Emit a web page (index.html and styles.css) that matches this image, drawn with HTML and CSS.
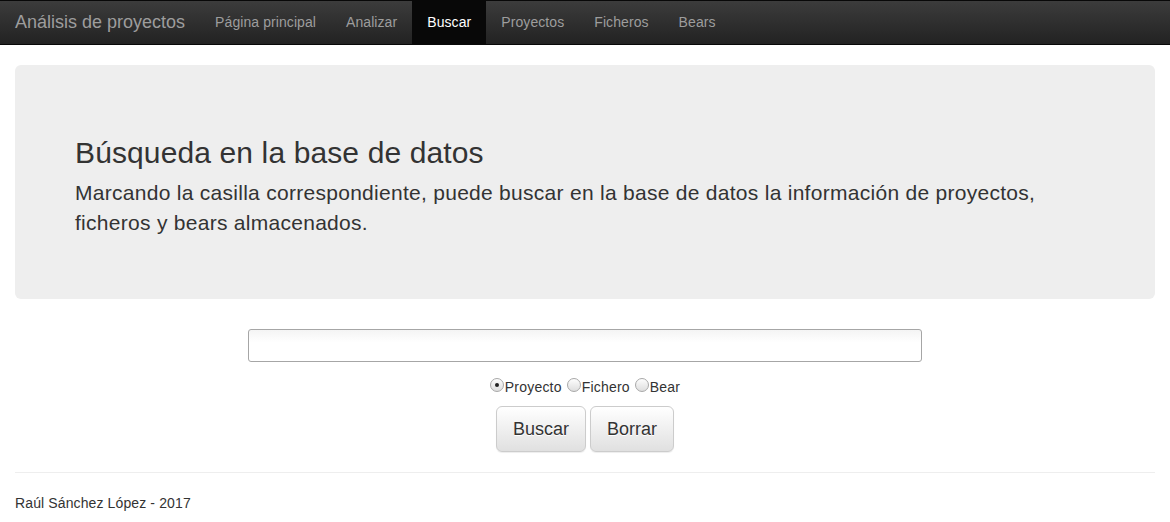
FILE: index.html
```html
<!DOCTYPE html>
<html lang="es">
<head>
<meta charset="utf-8">
<title>Buscar</title>
<link rel="stylesheet" href="styles.css">
</head>
<body>
<nav class="navbar">
  <a class="brand" href="#">Análisis de proyectos</a>
  <ul class="nav">
    <li><a href="#">Página principal</a></li>
    <li><a href="#">Analizar</a></li>
    <li class="active"><a href="#">Buscar</a></li>
    <li><a href="#">Proyectos</a></li>
    <li><a href="#">Ficheros</a></li>
    <li><a href="#">Bears</a></li>
  </ul>
</nav>
<main class="container">
  <section class="jumbotron">
    <h1>Búsqueda en la base de datos</h1>
    <p>Marcando la casilla correspondiente, puede buscar en la base de datos la información de proyectos, ficheros y bears almacenados.</p>
  </section>
  <form class="search">
    <input class="search-input" type="text">
    <div class="radios">
      <label><input type="radio" name="t" checked>Proyecto</label>
      <label><input type="radio" name="t">Fichero</label>
      <label><input type="radio" name="t">Bear</label>
    </div>
    <div class="buttons">
      <button type="button" class="btn">Buscar</button>
      <button type="button" class="btn">Borrar</button>
    </div>
  </form>
  <hr class="rule">
  <footer class="footer">Raúl Sánchez López - 2017</footer>
</main>
</body>
</html>
```
FILE: styles.css
```css
* { box-sizing: border-box; }
html, body { margin: 0; padding: 0; }
body {
  font-family: "Liberation Sans", Arial, sans-serif;
  font-size: 14px;
  line-height: 1.42857;
  color: #333;
  background: #fff;
}
.navbar {
  display: flex;
  align-items: stretch;
  height: 45px;
  padding: 0 15px;
  background: linear-gradient(to bottom, #3c3c3c 0, #222 100%);
  border-top: 1px solid #080808;
  border-bottom: 1px solid #080808;
}
.brand {
  font-size: 18px;
  line-height: 43px;
  color: #9d9d9d;
  text-decoration: none;
  margin-right: 15px;
}
.nav {
  display: flex;
  list-style: none;
  margin: 0;
  padding: 0;
}
.nav li a {
  display: block;
  padding: 0 15px;
  line-height: 43px;
  color: #9d9d9d;
  text-decoration: none;
  letter-spacing: 0.08px;
}
.nav li.active a {
  color: #fff;
  background: #080808;
}
.container {
  padding: 20px 15px 0;
}
.jumbotron {
  background: #eee;
  border-radius: 6px;
  padding: 48px 60px;
  margin-bottom: 30px;
}
.jumbotron h1 {
  font-size: 30px;
  font-weight: 500;
  line-height: 1.1;
  margin: 23px 0 9px;
  letter-spacing: 0.12px;
}
.jumbotron p {
  font-size: 21px;
  font-weight: 200;
  line-height: 1.42857;
  margin: 0 0 13px;
  letter-spacing: 0.28px;
}
.search {
  text-align: center;
}
.search-input {
  display: block;
  width: 674px;
  height: 33px;
  margin: 0 auto;
  border: 1px solid #a6a6a6;
  border-radius: 3px;
  background: linear-gradient(to bottom, #f4f4f4 0, #fff 40%);
  font: inherit;
  padding: 4px 6px;
}
.radios {
  margin-top: 15px;
  line-height: 20px;
  display: flex;
  justify-content: center;
  gap: 5px;
  letter-spacing: 0.2px;
}
.radios label {
  display: inline-flex;
  align-items: center;
}
.radios input {
  appearance: none;
  -webkit-appearance: none;
  width: 14px;
  height: 14px;
  margin: 0 1px 0 0;
  border: 1px solid #a8a8a8;
  border-radius: 50%;
  background: linear-gradient(to bottom, #fdfdfd 0, #dedede 100%);
  position: relative;
  top: -2px;
}
.radios input:checked::after {
  content: "";
  position: absolute;
  left: 4px;
  top: 4px;
  width: 4px;
  height: 4px;
  border-radius: 50%;
  background: #222;
}
.buttons {
  margin-top: 9px;
  display: flex;
  justify-content: center;
  gap: 4px;
}
.btn {
  font-family: inherit;
  font-size: 18px;
  line-height: 1.3333;
  padding: 11px 16px 9px;
  height: 46px;
  border-radius: 6px;
  border: 1px solid #ccc;
  color: #333;
  background: linear-gradient(to bottom, #fff 0, #e0e0e0 100%);
  box-shadow: inset 0 1px 0 rgba(255,255,255,.15), 0 1px 1px rgba(0,0,0,.075);
  text-shadow: 0 1px 0 #fff;
}
.rule {
  border: 0;
  border-top: 1px solid #eee;
  margin: 20px 0 0;
}
.footer {
  padding-top: 21px;
  letter-spacing: 0.12px;
}
```
